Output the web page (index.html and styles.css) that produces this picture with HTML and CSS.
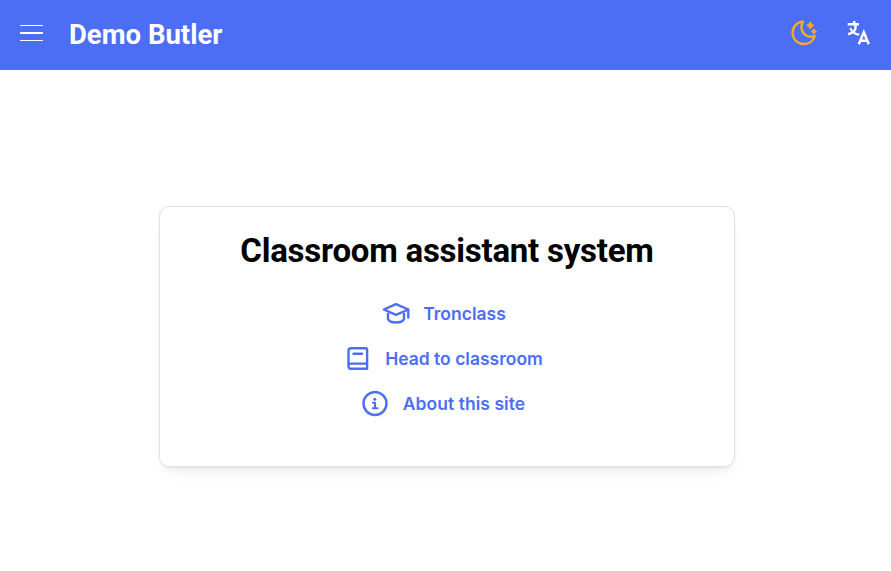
FILE: index.html
```html
<!DOCTYPE html>
<html lang="en">
<head>
<meta charset="utf-8">
<title>Demo Butler</title>
<link rel="stylesheet" href="styles.css">
</head>
<body>
<header class="topbar">
  <svg class="menu" viewBox="0 0 23 18"><path d="M0 1.500h23M0 16.500h23" stroke-width="1"/><path d="M0 9h23" stroke-width="2"/></svg>
  <div class="brand">Demo Butler</div>
  <svg class="moon" viewBox="0 0 28 28"><path d="M13 2.600C6.800 2.900 2.600 8 2.600 13.800c0 6.200 4.900 11.200 11.100 11.200 5.300 0 9.500-3.200 11-8-1.800.8-3.600 1-5.500.6C12.500 16.200 9.400 9.200 13 2.600Z"/><path class="star" d="M20.300 2.700q.8 2.900 3.700 3.700-2.900.8-3.700 3.700-.8-2.900-3.700-3.700 2.900-.8 3.700-3.700ZM24 9.800q.6 2.200 2.800 2.800-2.200.6-2.800 2.800-.6-2.200-2.800-2.800 2.200-.6 2.800-2.800Z"/></svg>
  <svg class="language" viewBox="0 0 24 26"><path d="M.7 4.200H12M7.200 1v3.200M8.600 4.200v2.500q0 5.500-7.400 7.600"/><path d="M3.400 8q1.800 6 8.800 6.600" stroke-width="2.100"/><path d="M11.800 24.200l5-12 5 12M13.600 20.700h6.500"/></svg>
</header>
<main class="page">
  <section class="card">
    <h1>Classroom assistant system</h1>
    <nav>
      <a class="cap" href="#"><svg viewBox="0 0 28 24"><path d="M14 2.200 1.800 7.500 14 12.800l12.300-5.300ZM6 9.500v7.500Q7.500 20.500 14 20.500t8-3.500V9.500M26.300 7.500V15.500"/></svg>Tronclass</a>
      <a class="book" href="#"><svg viewBox="0 0 22 24"><path d="M4 1.300h14.800q1.300 0 1.300 1.300v19.100H4q-2.500 0-2.500-2.500V3.800Q1.500 1.300 4 1.300ZM1.500 18.500q.3-1.900 2.500-1.900h16.100M6.500 6.700h8.500"/></svg>Head to classroom</a>
      <a class="info" href="#"><svg viewBox="0 0 26 26"><circle cx="13" cy="12.500" r="11.500"/><path class="thin" d="M11 11.700h2v5.500M10.700 17.300h4.800"/><circle class="dot" cx="12.800" cy="8.200" r="1.500"/></svg>About this site</a>
    </nav>
  </section>
</main>
</body>
</html>
```
FILE: styles.css
```css
* { box-sizing: border-box; }
body { margin: 0; height: 571px; display: flex; flex-direction: column; background: #fff; overflow: hidden; }
svg { flex: none; fill: none; }
.topbar { height: 70px; display: flex; align-items: center; background: #4c6ef5; padding: 0 20px; flex: none; }
.menu { width: 23px; height: 18px; stroke: #fff; margin-top: -4px; }
.brand { margin-left: 26px; font: 700 27.500px/34px Roboto, sans-serif; color: #fff; }
.moon { width: 28px; height: 28px; margin-left: auto; margin-top: -4px; stroke: #f3ab27; stroke-width: 2.4; stroke-linejoin: round; }
.star { fill: #f3ab27; stroke-width: .8; }
.language { width: 24px; height: 26px; margin-left: 29px; margin-top: -4px; stroke: #fff; stroke-width: 2.5; }
.page { flex: 1; padding: 136px 156px 0 159px; }
.card { height: 261px; border: 1px solid #dee2e6; border-radius: 10px; background: #fff; box-shadow: 0 1px 3px rgba(0,0,0,.05), 0 10px 15px -5px rgba(0,0,0,.05), 0 7px 7px -5px rgba(0,0,0,.04); padding-top: 22px; }
h1 { margin: 0; font: 700 33px/44px Roboto, sans-serif; letter-spacing: -.24px; text-align: center; color: #000; }
nav { margin-top: 18px; padding-right: 6px; display: flex; flex-direction: column; align-items: center; }
nav a { height: 45px; display: flex; align-items: center; color: #4c6ef5; text-decoration: none; font: 600 17.5px/28px Inter, sans-serif; }
nav svg { stroke: #4c6ef5; stroke-width: 2.400; stroke-linejoin: round; stroke-linecap: round; }
.cap svg { width: 28px; height: 24px; margin-right: 13px; }
.book { padding-left: 2px; }
.book svg { width: 22px; height: 24px; margin-right: 16px; }
.info { padding-right: 1px; letter-spacing: .05px; }
.info svg { width: 26px; height: 26px; margin-right: 15px; }
.thin { stroke-width: 2; }
.dot { fill: #4c6ef5; stroke: none; }
```
